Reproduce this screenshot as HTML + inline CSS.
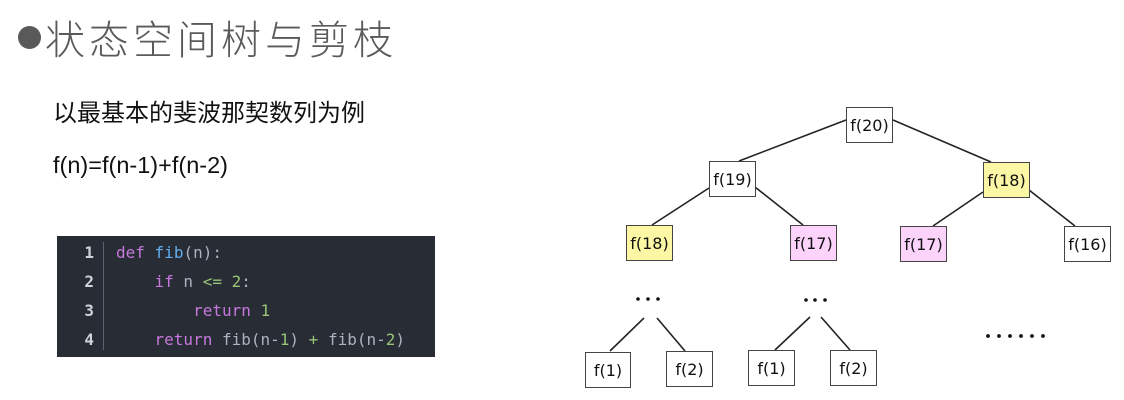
<!DOCTYPE html>
<html><head><meta charset="utf-8"><style>
body{margin:0;width:1124px;height:400px;background:#fff;position:relative;overflow:hidden;font-family:"Liberation Sans","Noto Sans CJK SC",sans-serif}
.t{position:absolute;white-space:nowrap}
.code{position:absolute;left:57px;top:236px;width:378px;height:121px;background:#282c34;font-family:"DejaVu Sans Mono","Liberation Mono",monospace;font-size:16px;color:#abb2bf}
.ln{position:absolute;left:0;width:37px;text-align:right;color:#d0d4da;font-weight:bold}
.bar{position:absolute;left:46px;top:6px;width:1px;height:108px;background:#5c6370}
.ln,.cl{height:29px;line-height:29px}
.cl{position:absolute;left:59px;white-space:pre}
.k{color:#c678dd}.f{color:#61afef}.n{color:#98c379}
.box{position:absolute;border:1.5px solid #444;box-sizing:border-box;font-size:16px;display:flex;align-items:center;justify-content:center;font-family:"DejaVu Sans",sans-serif;color:#111;background:#fff}
.y{background:#fbf7a5}.p{background:#fbd3fb}
</style></head><body>
<div class="t" style="left:18px;top:26px;width:23px;height:23px;border-radius:50%;background:#595959"></div>
<div class="t" style="left:45px;top:8px;font-size:40px;letter-spacing:4px;color:#5a5a5a;font-weight:300;font-family:'Noto Sans CJK SC',sans-serif">状态空间树与剪枝</div>
<div class="t" style="left:53px;top:93px;font-size:24px;letter-spacing:0;color:#111">以最基本的斐波那契数列为例</div>
<div class="t" style="left:53px;top:152px;font-size:23.5px;color:#111">f(n)=f(n-1)+f(n-2)</div>
<div class="code">
<div class="bar"></div>
<div class="ln" style="top:2px">1</div><div class="ln" style="top:31px">2</div><div class="ln" style="top:60px">3</div><div class="ln" style="top:89px">4</div>
<div class="cl" style="top:2px"><span class="k">def</span> <span class="f">fib</span>(n):</div>
<div class="cl" style="top:31px">    <span class="k">if</span> n <span class="n">&lt;=</span> <span class="n">2</span>:</div>
<div class="cl" style="top:60px">        <span class="k">return</span> <span class="n">1</span></div>
<div class="cl" style="top:89px">    <span class="k">return</span> fib(n-<span class="n">1</span>) <span class="n">+</span> fib(n-<span class="n">2</span>)</div>
</div>
<svg class="t" style="left:0;top:0" width="1124" height="400">
<g stroke="#222" stroke-width="1.6">
<line x1="846" y1="120" x2="739" y2="161"/><line x1="893" y1="120" x2="991" y2="162"/>
<line x1="709" y1="188" x2="652" y2="225"/><line x1="755" y1="187" x2="803" y2="225"/>
<line x1="983" y1="192" x2="933" y2="226"/><line x1="1029" y1="190" x2="1075" y2="226"/>
<line x1="644" y1="318" x2="610" y2="351"/><line x1="657" y1="318" x2="685" y2="351"/>
<line x1="810" y1="317" x2="775" y2="350"/><line x1="821" y1="317" x2="850" y2="350"/>
</g>
<g fill="#111">
<circle cx="638" cy="299" r="1.8"/><circle cx="648" cy="299" r="1.8"/><circle cx="658" cy="299" r="1.8"/>
<circle cx="806" cy="300" r="1.8"/><circle cx="815" cy="300" r="1.8"/><circle cx="825" cy="300" r="1.8"/>
<circle cx="988" cy="336" r="1.9"/><circle cx="999" cy="336" r="1.9"/><circle cx="1010" cy="336" r="1.9"/><circle cx="1021" cy="336" r="1.9"/><circle cx="1032" cy="336" r="1.9"/><circle cx="1043" cy="336" r="1.9"/>
</g></svg>
<div class="box" style="left:846px;top:107px;width:47px;height:36px">f(20)</div>
<div class="box" style="left:709px;top:161px;width:47px;height:36px">f(19)</div>
<div class="box y" style="left:983px;top:162px;width:47px;height:36px">f(18)</div>
<div class="box y" style="left:626px;top:225px;width:47px;height:36px">f(18)</div>
<div class="box p" style="left:790px;top:225px;width:47px;height:36px">f(17)</div>
<div class="box p" style="left:900px;top:226px;width:47px;height:36px">f(17)</div>
<div class="box" style="left:1064px;top:226px;width:47px;height:36px">f(16)</div>
<div class="box" style="left:585px;top:352px;width:46px;height:36px">f(1)</div>
<div class="box" style="left:666px;top:351px;width:47px;height:36px">f(2)</div>
<div class="box" style="left:748px;top:350px;width:47px;height:36px">f(1)</div>
<div class="box" style="left:830px;top:350px;width:47px;height:36px">f(2)</div>
</body></html>
